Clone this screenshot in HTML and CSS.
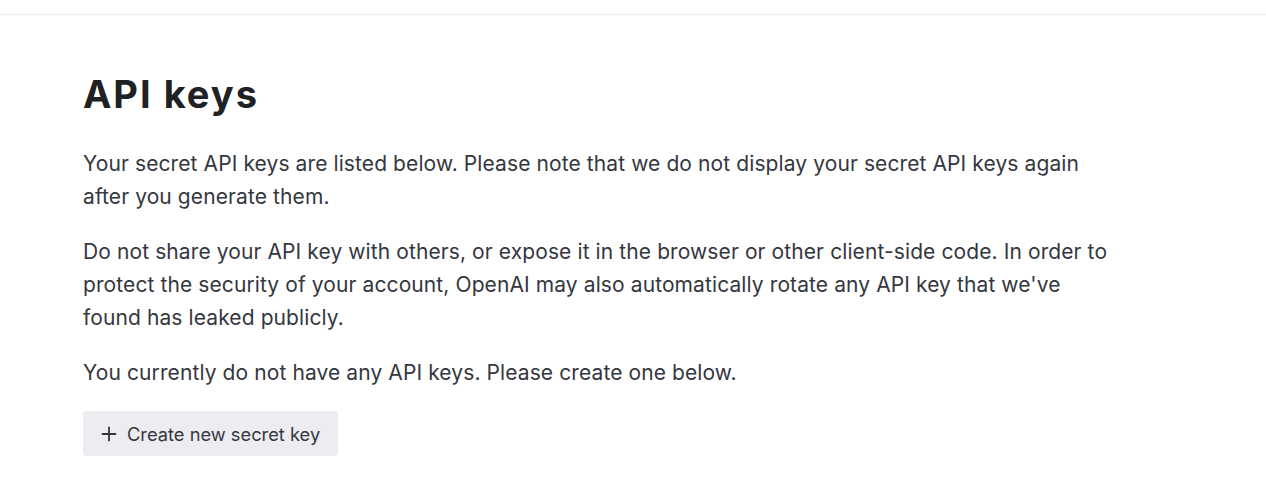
FILE: index.html
```html
<!DOCTYPE html>
<html lang="en">
<head>
  <meta charset="UTF-8" />
  <title>API keys</title>
  <link rel="stylesheet" href="styles.css">
</head>
<body>
  <header class="topbar"></header>

  <main class="page">
    <h1>API keys</h1>
    <p>Your secret API keys are listed below. Please note that we do not display your secret API keys again after you generate them.</p>
    <p>Do not share your API key with others, or expose it in the browser or other client-side code. In order to protect the security of your account, OpenAI may also automatically rotate any API key that we've found has leaked publicly.</p>
    <p>You currently do not have any API keys. Please create one below.</p>

    <button class="btn-create" type="button">
      <svg width="16" height="16" viewBox="0 0 16 16" fill="none" stroke="currentColor" stroke-width="1.8" stroke-linecap="round">
        <path d="M8 1.5v13M1.5 8h13"/>
      </svg>
      Create new secret key
    </button>
  </main>
</body>
</html>
```

FILE: styles.css
```css
body {
  margin: 0;
  font-family: Inter, "Noto Sans", sans-serif;
  background: #fff;
  color: #353740;
}

.topbar {
  height: 14px;
  border-bottom: 1px solid #ececf1;
}

.page {
  padding: 0 83px;
  max-width: 1040px;
}

h1 {
  margin: 55px 0 29px;
  font-size: 38px;
  font-weight: 700;
  letter-spacing: 2px;
  line-height: 48px;
  color: #202123;
}

p {
  margin: 0 0 22px;
  font-size: 21px;
  letter-spacing: 0.1px;
  line-height: 33px;
}

.btn-create {
  display: inline-flex;
  align-items: center;
  gap: 10px;
  height: 45px;
  padding: 0 18px;
  border: none;
  border-radius: 4px;
  background: #ececf1;
  color: #353740;
  font-family: inherit;
  font-size: 18.3px;
  cursor: pointer;
}
```
